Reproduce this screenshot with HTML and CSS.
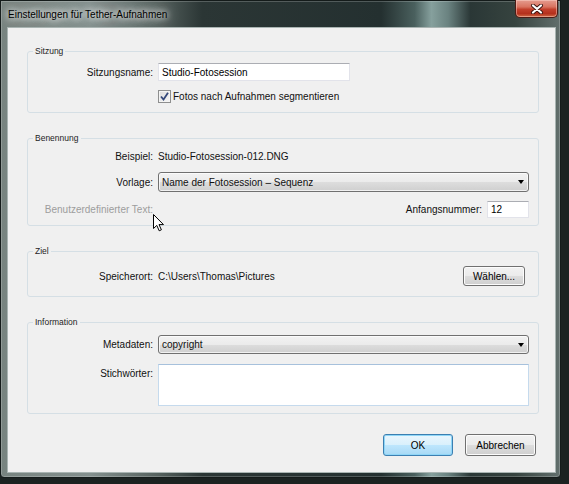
FILE: index.html
```html
<!DOCTYPE html>
<html lang="de">
<head>
  <meta charset="UTF-8" />
  <title>Einstellungen für Tether-Aufnahmen</title>
  <link rel="stylesheet" href="styles.css">
</head>
<body>

<div class="window">
  <!-- Title bar -->
  <div class="titlebar">
    <span class="title">Einstellungen für Tether-Aufnahmen</span>
    <button class="close" title="Schließen">
      <svg width="14" height="10" viewBox="0 0 14 10">
        <path d="M3 1.5 L11 8.5 M11 1.5 L3 8.5" stroke="#3a1410" stroke-width="4" stroke-linecap="round"/>
        <path d="M3 1.5 L11 8.5 M11 1.5 L3 8.5" stroke="#ffffff" stroke-width="2.2" stroke-linecap="round"/>
      </svg>
    </button>
  </div>

  <div class="client">

    <!-- Sitzung -->
    <fieldset class="group group-session">
      <legend>Sitzung</legend>
      <div class="row">
        <span class="label">Sitzungsname:</span>
        <input class="textbox session-name" type="text" value="Studio-Fotosession">
      </div>
      <div class="row row-check">
        <span></span>
        <span class="check">
          <span class="checkbox">
            <svg width="11" height="11" viewBox="0 0 11 11">
              <path d="M2 5.5 L4.5 8.5 L9 1.8" fill="none" stroke="#34487a" stroke-width="1.8"/>
            </svg>
          </span>
          Fotos nach Aufnahmen segmentieren
        </span>
      </div>
    </fieldset>

    <!-- Benennung -->
    <fieldset class="group group-naming">
      <legend>Benennung</legend>
      <div class="row row-sample">
        <span class="label">Beispiel:</span>
        <span class="value">Studio-Fotosession-012.DNG</span>
      </div>
      <div class="row row-template">
        <span class="label">Vorlage:</span>
        <div class="combo">
          <span>Name der Fotosession – Sequenz</span>
          <span class="arrow"></span>
        </div>
      </div>
      <div class="row row-custom">
        <span class="label disabled">Benutzerdefinierter Text:</span>
        <div class="start-number">
          <span class="label">Anfangsnummer:</span>
          <input class="textbox number" type="text" value="12">
        </div>
      </div>
    </fieldset>

    <!-- Ziel -->
    <fieldset class="group group-target">
      <legend>Ziel</legend>
      <div class="row">
        <span class="label">Speicherort:</span>
        <div class="location">
          <span class="value">C:\Users\Thomas\Pictures</span>
          <button class="btn choose">Wählen...</button>
        </div>
      </div>
    </fieldset>

    <!-- Information -->
    <fieldset class="group group-info">
      <legend>Information</legend>
      <div class="row row-meta">
        <span class="label">Metadaten:</span>
        <div class="combo">
          <span>copyright</span>
          <span class="arrow"></span>
        </div>
      </div>
      <div class="row row-keywords">
        <span class="label label-top">Stichwörter:</span>
        <textarea class="keywords"></textarea>
      </div>
    </fieldset>

    <div class="actions">
      <button class="btn default">OK</button>
      <button class="btn">Abbrechen</button>
    </div>

    <!-- mouse pointer -->
    <svg class="pointer" width="12" height="18" viewBox="0 0 12 18">
      <path d="M0.5 0.5 L0.5 14.5 L3.8 11.4 L6.2 16.8 L8.4 15.8 L6 10.6 L10.5 10.6 Z" fill="#ffffff" stroke="#000000" stroke-width="1" stroke-linejoin="round"/>
    </svg>
  </div>
</div>

</body>
</html>
```

FILE: styles.css
```css
* { box-sizing: border-box; }

body {
  margin: 0;
  background-color: #1b2221;
  font-family: "Liberation Sans", Arial, sans-serif;
  font-size: 10px;
  color: #111;
  overflow: hidden;
}

/* glass frame */
.window {
  width: 561px;
  height: 478px;
  border: 1px solid #141b1a;
  border-radius: 0 0 4px 4px;
  background:
    linear-gradient(90deg,
      #77837f 0%, #84908e 16%, #56625f 28%, #2b3635 36%,
      #243030 68%, #4a605e 74%, #86a09d 77%, #6a8280 80%,
      #2a3736 84%, #36433f 92%, #626f6d 100%);
  box-shadow: inset 0 0 0 1px rgba(255, 255, 255, 0.2);
}

.titlebar {
  height: 27px;
  display: flex;
  align-items: flex-start;
  padding-left: 7px;
}

.title {
  margin-top: 8px;
  font-size: 10px;
  color: #000;
  text-shadow: 0 0 6px #fff, 0 0 10px #fff, 0 0 16px rgba(255,255,255,0.8);
}

.close {
  margin-left: auto;
  margin-right: 2px;
  width: 43px;
  height: 18px;
  margin-top: -1px;
  padding: 0;
  border: 1px solid #4b1b15;
  border-top: none;
  border-radius: 0 0 5px 5px;
  background: linear-gradient(#e59c8f 0%, #d97461 40%, #c2402c 55%, #b4301d 80%, #cf6a44 100%);
  box-shadow: inset 0 0 0 1px rgba(255, 220, 210, 0.45);
  display: flex;
  align-items: center;
  justify-content: center;
}

.client {
  position: relative;
  margin: 0 5px 0 7px;
  height: 444px;
  background-color: #f0f0f0;
  padding: 18px 16px 0 19px;
  box-shadow: 0 0 0 1px #a9b4b2;
}

/* group boxes */
.group {
  margin: 0 0 20px 0;
  padding: 0 9px 0 0;
  border: 1px solid #d5dfe5;
  border-radius: 3px;
  min-width: 0;
}

.group legend {
  margin-left: 5px;
  padding: 0 2px;
  font-size: 8.5px;
  line-height: 10px;
  color: #1e1e1e;
}

.row {
  display: grid;
  grid-template-columns: 125px 1fr;
  column-gap: 5px;
  align-items: center;
}

.label {
  text-align: right;
  white-space: nowrap;
}

.label.disabled { color: #9d9d9d; }
.label-top { align-self: start; margin-top: 4px; }

.value { white-space: nowrap; }

.textbox {
  font: inherit;
  color: #000;
  background: #fff;
  border: 1px solid #e2e3ea;
  border-top-color: #abadb3;
  padding: 0 3px;
  margin: 0;
  outline: none;
}

.group-session { padding-top: 7px; padding-bottom: 9px; }
.session-name { width: 192px; height: 18px; }
.row-check { margin-top: 9px; }

.check {
  display: flex;
  align-items: center;
  gap: 2px;
  white-space: nowrap;
}

.checkbox {
  width: 13px;
  height: 13px;
  border: 1px solid #8e8f8f;
  background: linear-gradient(135deg, #dcdcdc, #f6f6f6);
  box-shadow: inset 0 0 0 1px #f4f4f4;
  display: flex;
  align-items: center;
  justify-content: center;
}

.group-naming { padding-top: 3px; padding-bottom: 7px; }
.row-sample { height: 20px; }
.row-template { margin-top: 6px; }
.row-custom { margin-top: 9px; }

.combo {
  height: 20px;
  display: flex;
  align-items: center;
  justify-content: space-between;
  padding: 0 4px 0 3px;
  border: 1px solid #707070;
  border-radius: 3px;
  background: linear-gradient(#f2f2f2 0%, #ebebeb 50%, #dddddd 51%, #cfcfcf 100%);
  box-shadow: inset 0 0 0 1px rgba(255, 255, 255, 0.7);
  white-space: nowrap;
}

.arrow {
  width: 0;
  height: 0;
  border-left: 3.5px solid transparent;
  border-right: 3.5px solid transparent;
  border-top: 4px solid #000;
}

.start-number {
  display: flex;
  align-items: center;
  justify-content: flex-end;
  gap: 5px;
}

.number { width: 42px; height: 17px; }

.group-target { padding-top: 10px; padding-bottom: 10px; }

.location {
  display: flex;
  align-items: center;
  justify-content: space-between;
}

.btn {
  font: inherit;
  color: #000;
  height: 20px;
  padding: 0 6px;
  border: 1px solid #707070;
  border-radius: 3px;
  background: linear-gradient(#f2f2f2 0%, #ebebeb 50%, #dddddd 51%, #cfcfcf 100%);
  box-shadow: inset 0 0 0 1px #fcfcfc;
}

.choose { width: 62px; margin-right: 4px; }

.group-info { padding-top: 8px; padding-bottom: 7px; }
.row-meta .combo { height: 19px; }
.row-keywords { margin-top: 10px; }

.keywords {
  display: block;
  height: 42px;
  margin: 0;
  resize: none;
  background: #fff;
  border: 1px solid #c5daed;
  border-top-color: #a7c1dc;
  outline: none;
}

.actions {
  display: flex;
  justify-content: flex-end;
  gap: 12px;
  margin: 20px 3px 0 0;
}

.actions .btn { height: 22px; }
.actions .btn:first-child { width: 70px; }
.actions .btn:last-child { width: 71px; }

.btn.default {
  border-color: #3c7fb1;
  background: linear-gradient(#eaf6fd 0%, #d9f0fc 50%, #bee6fd 51%, #a7d9f5 100%);
  box-shadow: inset 0 0 0 1px #8fd6f7;
}

.pointer {
  position: absolute;
  left: 145px;
  top: 186px;
}
```
